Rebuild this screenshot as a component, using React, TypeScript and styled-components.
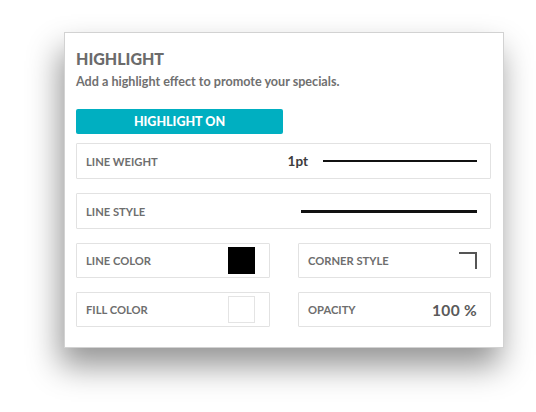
import React from "react";
import styled, { createGlobalStyle } from "styled-components";

const GlobalStyle = createGlobalStyle`
    html, body {
        margin: 0;
        padding: 0;
        background: #ffffff;
    }
    body {
        font-family: Lato, "Open Sans", Arial, sans-serif;
    }
`;

const Page = styled.div`
    width: 536px;
    height: 412px;
    padding: 32px 0 0 64px;
    box-sizing: border-box;
`;

const Card = styled.div`
    width: 440px;
    height: 316px;
    box-sizing: border-box;
    padding: 16px 14px 0 11px;
    background: #fff;
    border: 1px solid #d2d2d2;
    box-shadow: -4px 18px 30px rgba(0, 0, 0, 0.42);
`;

const Title = styled.h2`
    margin: 0;
    font-size: 16px;
    font-weight: 900;
    color: #6b6b6b;
    line-height: 20px;
`;

const Subtitle = styled.p`
    margin: 5px 0 0;
    font-size: 12.6px;
    font-weight: 700;
    color: #707070;
    line-height: 16px;
`;

const ToggleButton = styled.button`
    display: block;
    margin-top: 19px;
    width: 207px;
    height: 25px;
    border: none;
    border-radius: 2px;
    background: #00afc1;
    color: #fff;
    font-family: inherit;
    font-size: 12.5px;
    font-weight: 900;
    padding: 0;
`;

const Fields = styled.div`
    margin-top: 9px;
    display: grid;
    grid-template-columns: 194px 193px;
    column-gap: 28px;
    row-gap: 14px;
`;

const Field = styled.div<{ wide?: boolean; tall?: number }>`
    grid-column: ${p => (p.wide ? "1 / -1" : "auto")};
    height: ${p => p.tall ?? 36}px;
    box-sizing: border-box;
    border: 1px solid #e2e2e2;
    border-radius: 1px;
    display: flex;
    align-items: center;
    padding: 0 13px 0 9px;
`;

const Label = styled.span`
    font-size: 11.2px;
    font-weight: 700;
    color: #6e6e6e;
    flex: 1;
`;

const Value = styled.span`
    font-size: 13.5px;
    font-weight: 700;
    color: #3c3c3c;
    margin-right: 15px;
`;

const Stroke = styled.div<{ width: number; weight: number }>`
    width: ${p => p.width}px;
    height: ${p => p.weight}px;
    background: #111;
`;

const Swatch = styled.div<{ color: string }>`
    width: 27px;
    height: 27px;
    box-sizing: border-box;
    background: ${p => p.color};
    border: 1px solid ${p => (p.color === "#000" ? "#000" : "#e4e4e4")};
    margin-right: 1px;
`;

const Percent = styled.span`
    font-size: 15.5px;
    font-weight: 700;
    color: #5a5a5a;
    letter-spacing: 0.3px;
`;

const CornerIcon = () => (
    <svg width="18" height="17" viewBox="0 0 18 17">
        <path d="M0 1 H17 V17" fill="none" stroke="#555" strokeWidth="2" />
    </svg>
);

export default function App() {
    return (
        <>
            <GlobalStyle />
            <Page>
                <Card>
                    <Title>HIGHLIGHT</Title>
                    <Subtitle>Add a highlight effect to promote your specials.</Subtitle>
                    <ToggleButton>HIGHLIGHT ON</ToggleButton>
                    <Fields>
                        <Field wide>
                            <Label>LINE WEIGHT</Label>
                            <Value>1pt</Value>
                            <Stroke width={154} weight={2} />
                        </Field>
                        <Field wide>
                            <Label>LINE STYLE</Label>
                            <Stroke width={176} weight={3} />
                        </Field>
                        <Field tall={35}>
                            <Label>LINE COLOR</Label>
                            <Swatch color="#000" />
                        </Field>
                        <Field tall={35}>
                            <Label>CORNER STYLE</Label>
                            <CornerIcon />
                        </Field>
                        <Field tall={35}>
                            <Label>FILL COLOR</Label>
                            <Swatch color="#fff" />
                        </Field>
                        <Field tall={35}>
                            <Label>OPACITY</Label>
                            <Percent>100 %</Percent>
                        </Field>
                    </Fields>
                </Card>
            </Page>
        </>
    );
}
